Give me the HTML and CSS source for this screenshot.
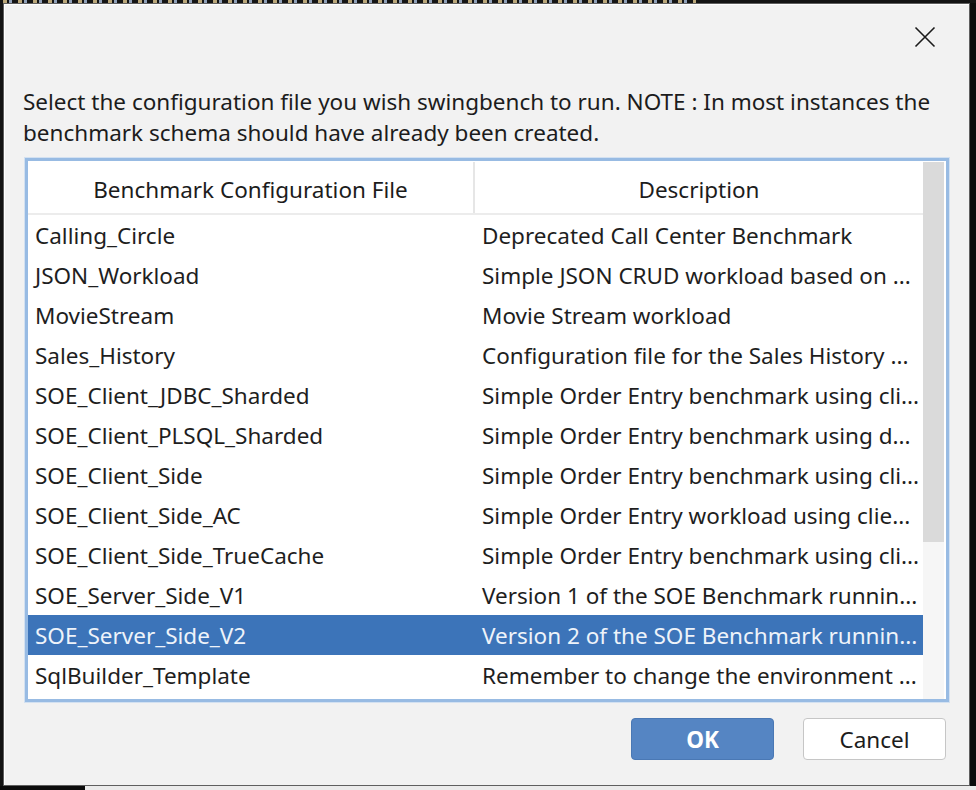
FILE: index.html
```html
<!DOCTYPE html>
<html>
<head>
<meta charset="utf-8">
<link rel="stylesheet" href="styles.css">
</head>
<body>
<div class="screen">
  <div class="topstrip"></div>
  <div class="middle">
    <div class="dialog">
      <div class="titlebar">
        <button class="close" aria-label="Close">
          <svg width="22" height="22" viewBox="0 0 22 22"><path d="M1.5 1.5 L20.5 20.5 M20.5 1.5 L1.5 20.5" stroke="#1b1b1b" stroke-width="1.6" fill="none"/></svg>
        </button>
      </div>
      <p class="message">Select the configuration file you wish swingbench to run. NOTE : In most instances the benchmark schema should have already been created.</p>
      <div class="tableframe">
        <div class="tablebody">
          <div class="grid">
            <div class="header">
              <div class="hcell">Benchmark Configuration File</div>
              <div class="hcell last">Description</div>
            </div>
            <div class="row"><div class="cell">Calling_Circle</div><div class="cell">Deprecated Call Center Benchmark</div></div>
            <div class="row"><div class="cell">JSON_Workload</div><div class="cell">Simple JSON CRUD workload based on ...</div></div>
            <div class="row"><div class="cell">MovieStream</div><div class="cell">Movie Stream workload</div></div>
            <div class="row"><div class="cell">Sales_History</div><div class="cell">Configuration file for the Sales History ...</div></div>
            <div class="row"><div class="cell">SOE_Client_JDBC_Sharded</div><div class="cell">Simple Order Entry benchmark using cli...</div></div>
            <div class="row"><div class="cell">SOE_Client_PLSQL_Sharded</div><div class="cell">Simple Order Entry benchmark using d...</div></div>
            <div class="row"><div class="cell">SOE_Client_Side</div><div class="cell">Simple Order Entry benchmark using cli...</div></div>
            <div class="row"><div class="cell">SOE_Client_Side_AC</div><div class="cell">Simple Order Entry workload using clie...</div></div>
            <div class="row"><div class="cell">SOE_Client_Side_TrueCache</div><div class="cell">Simple Order Entry benchmark using cli...</div></div>
            <div class="row"><div class="cell">SOE_Server_Side_V1</div><div class="cell">Version 1 of the SOE Benchmark runnin...</div></div>
            <div class="row selected"><div class="cell">SOE_Server_Side_V2</div><div class="cell">Version 2 of the SOE Benchmark runnin...</div></div>
            <div class="row"><div class="cell">SqlBuilder_Template</div><div class="cell">Remember to change the environment ...</div></div>
          </div>
          <div class="scrollbar"><div class="thumb"></div></div>
        </div>
      </div>
      <div class="buttons">
        <button class="btn primary">OK</button>
        <button class="btn">Cancel</button>
      </div>
    </div>
    <div class="rightedge"></div>
  </div>
  <div class="bottomstrip"><div class="bleft"></div><div class="bright"></div></div>
</div>
</body>
</html>
```
FILE: styles.css
```css
html, body {
  margin: 0;
  padding: 0;
  background: #141414;
}
.screen {
  width: 976px;
  height: 790px;
  overflow: hidden;
  display: flex;
  flex-direction: column;
  background: #141414;
  font-family: "Noto Sans", "Open Sans", sans-serif;
  color: #1e1e1e;
}
.topstrip {
  height: 3px;
  margin-right: 280px;
  background: repeating-linear-gradient(90deg, #141414 0 3px, #b9a679 3px 7px, #141414 7px 9px, #8fa0b8 9px 12px, #141414 12px 15px);
}
.middle {
  display: flex;
  height: 783px;
  padding-left: 3px;
}
.dialog {
  width: 965px;
  height: 781px;
  border: 1px solid #5f5f5f;
  background: #f2f2f2;
  box-shadow: inset 1px 1px 0 #ffffff;
  display: flex;
  flex-direction: column;
}
.rightedge {
  flex: 1;
  background: #0c0c0c;
}
.titlebar {
  height: 82px;
  display: flex;
  justify-content: flex-end;
  align-items: flex-start;
}
.close {
  margin: 20px 31px 0 0;
  width: 26px;
  height: 26px;
  padding: 2px;
  border: none;
  background: transparent;
  display: flex;
  align-items: center;
  justify-content: center;
}
.message {
  margin: 0 0 0 19px;
  width: 930px;
  font-size: 22.5px;
  line-height: 31px;
  color: #1c1c1c;
}
.tableframe {
  margin: 10px 0 0 21px;
  width: 918px;
  height: 538px;
  border: 3px solid #98bbe3;
  box-shadow: 0 0 0 1px #d3e1f1;
  background: #ffffff;
}
.tablebody {
  display: flex;
  height: 100%;
  padding-top: 1px;
  box-sizing: border-box;
}
.grid {
  width: 895px;
  display: flex;
  flex-direction: column;
}
.header {
  display: flex;
  height: 51px;
  border-bottom: 2px solid #ececec;
}
.hcell {
  width: 447px;
  display: flex;
  align-items: center;
  justify-content: center;
  font-size: 22.5px;
  color: #1c1c1c;
  border-right: 2px solid #e6e6e6;
  box-sizing: border-box;
  padding-top: 3px;
}
.hcell.last {
  border-right: none;
  width: 448px;
}
.row {
  display: flex;
  height: 40px;
  align-items: center;
  font-size: 22.5px;
}
.cell {
  width: 447px;
  padding-left: 7px;
  padding-top: 1px;
  box-sizing: border-box;
  white-space: nowrap;
  overflow: hidden;
}
.cell + .cell {
  width: 448px;
  padding-left: 7px;
}
.row.selected {
  background: #3c74b9;
  color: #eef3fa;
}
.scrollbar {
  width: 21px;
  background: #f6f6f6;
  display: flex;
  flex-direction: column;
}
.thumb {
  height: 380px;
  background: #dadada;
}
.buttons {
  display: flex;
  justify-content: flex-end;
  gap: 29px;
  margin: 16px 23px 0 0;
}
.btn {
  width: 143px;
  height: 42px;
  border-radius: 4px;
  border: 1px solid #c6c6c6;
  background: #ffffff;
  font-family: "Noto Sans", "Open Sans", sans-serif;
  font-size: 22.5px;
  color: #1c1c1c;
  padding: 0;
}
.btn.primary {
  background: #5585c3;
  border-color: #4a78b4;
  color: #ffffff;
  font-weight: bold;
}
.bottomstrip {
  flex: 1;
  display: flex;
}
.bleft {
  width: 85px;
  background: #0c0c0c;
}
.bright {
  flex: 1;
  background: #ebebeb;
}
```
